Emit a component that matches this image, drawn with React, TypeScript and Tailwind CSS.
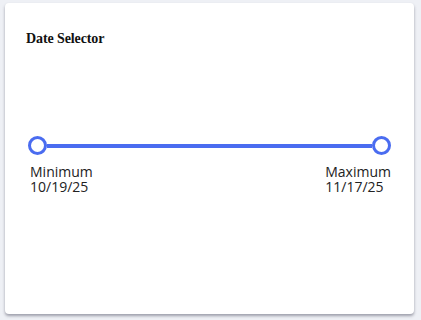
import React from "react";

const App: React.FC = () => {
  return (
    <div className="w-[421px] h-[320px] bg-[#eef0f5] pt-[3px] pl-[5px]">
      <div className="w-[409px] h-[311px] bg-white rounded-[4px] shadow-[0_2px_3px_rgba(60,60,80,0.45)] pt-[27px] px-[21px]">
        <h2
          className="text-[14px] font-bold text-[#111] leading-[18px]"
          style={{ fontFamily: '"Liberation Serif", serif', letterSpacing: "-0.1px" }}
        >
          Date Selector
        </h2>

        <div className="mx-[2px]">
          <div className="mt-[88px] flex items-center">
            <div className="w-[19px] h-[19px] rounded-full border-[3.5px] border-[#4a6cf0] bg-white shrink-0" />
            <div className="flex-1 h-[4px] bg-[#4a6cf0]" />
            <div className="w-[19px] h-[19px] rounded-full border-[3.5px] border-[#4a6cf0] bg-white shrink-0" />
          </div>

          <div
            className="mt-[9px] flex justify-between text-[14px] leading-[15px] text-[#222]"
            style={{ fontFamily: '"Open Sans", sans-serif' }}
          >
            <div className="pl-[2px]">
              <div>Minimum</div>
              <div>10/19/25</div>
            </div>
            <div>
              <div>Maximum</div>
              <div>11/17/25</div>
            </div>
          </div>
        </div>
      </div>
    </div>
  );
};

export default App;
